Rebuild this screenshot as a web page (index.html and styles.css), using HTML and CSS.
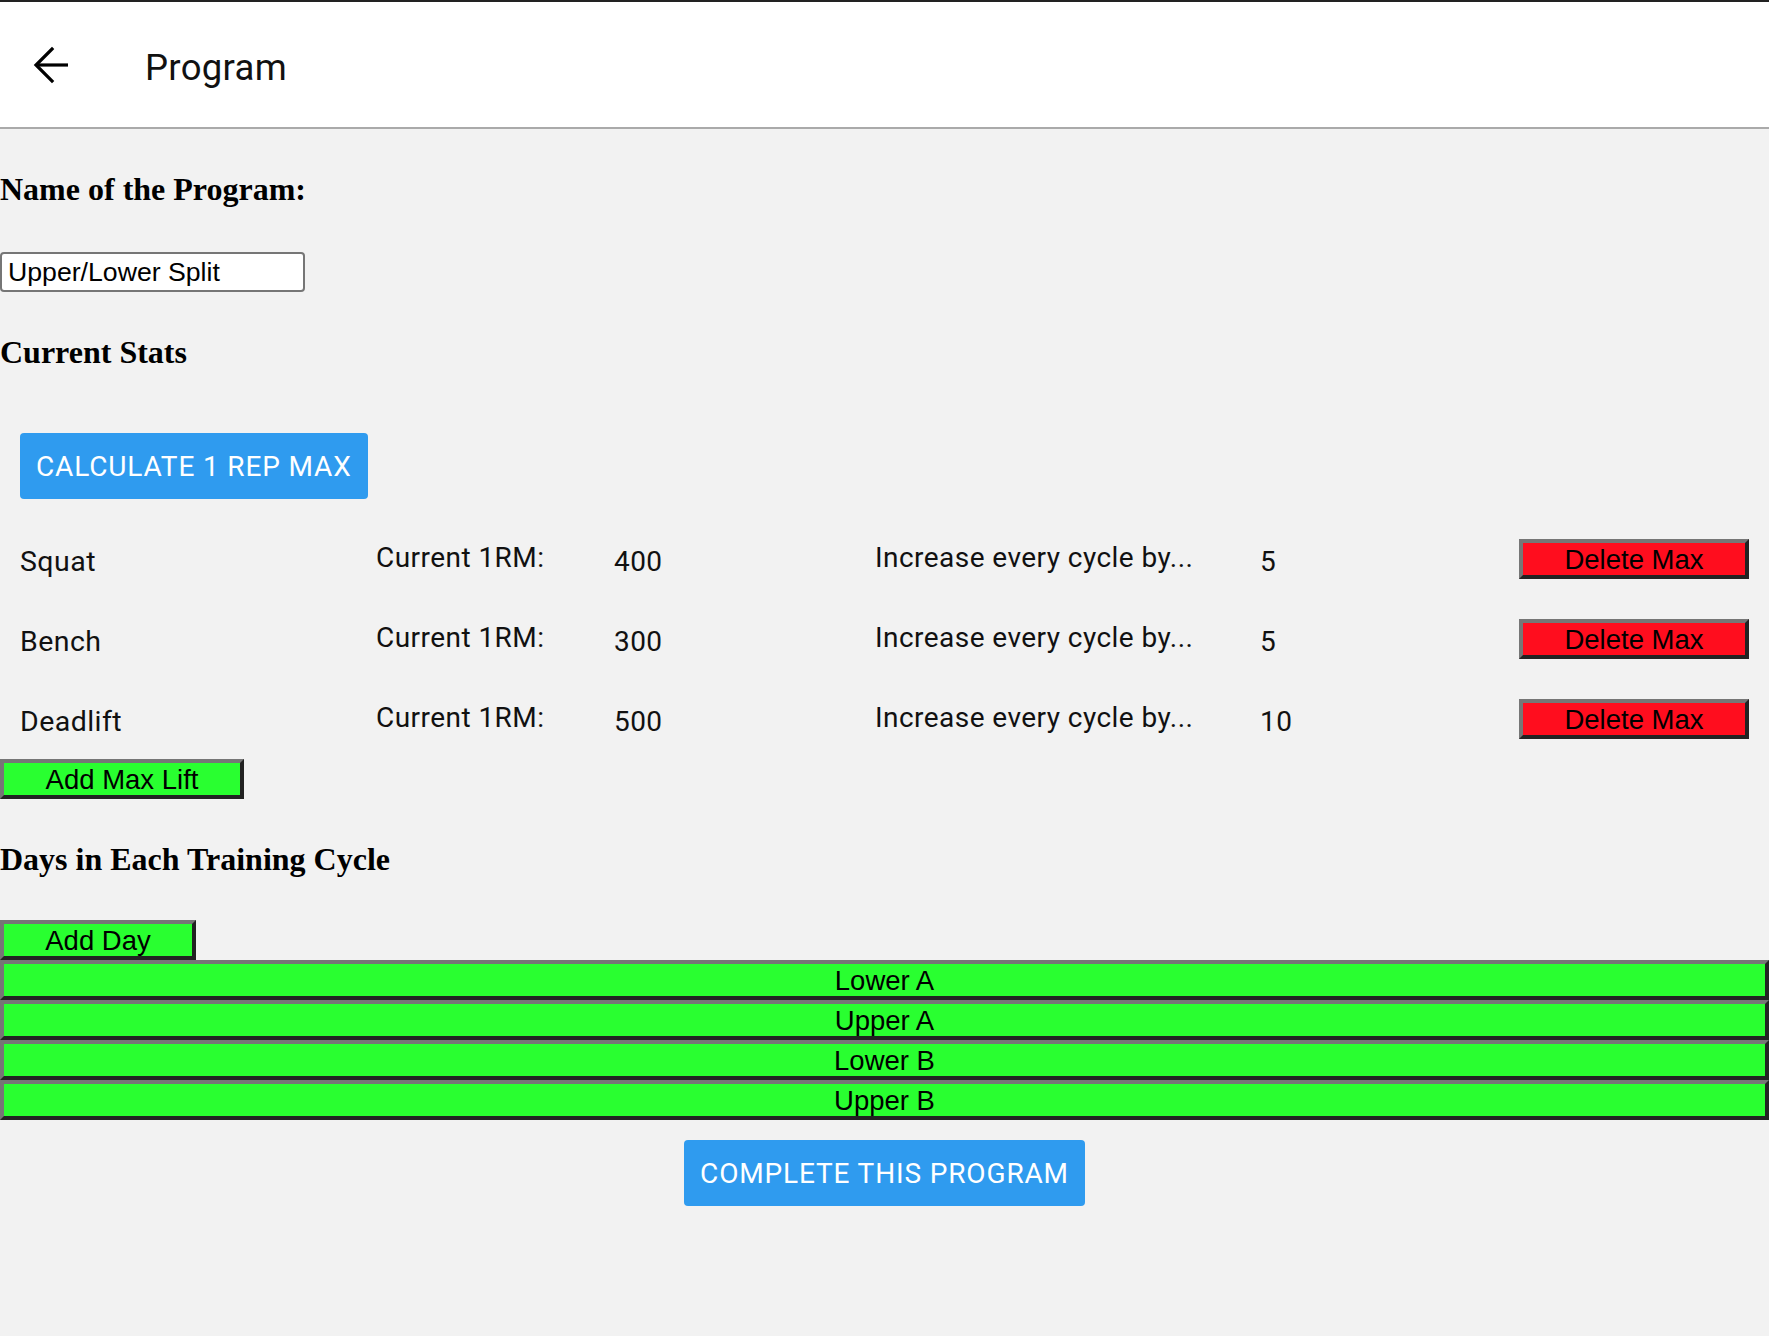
FILE: index.html
```html
<!DOCTYPE html>
<html>
<head>
<meta charset="utf-8">
<link rel="stylesheet" href="styles.css">
</head>
<body>
<header class="topbar">
  <svg class="back" width="48" height="48" viewBox="0 0 48 48" aria-hidden="true">
    <polyline points="24,8 8,24 24,40" fill="none" stroke="#000" stroke-width="3.2" stroke-linecap="square" stroke-linejoin="miter"/>
    <line x1="9" y1="24" x2="40" y2="24" stroke="#000" stroke-width="3.2"/>
  </svg>
  <div class="title">Program</div>
</header>
<main class="page">
  <h4 class="heading">Name of the Program:</h4>
  <div><input class="name-input" type="text" value="Upper/Lower Split"></div>
  <h4 class="heading">Current Stats</h4>
  <div class="blue-wrap left"><button class="blue-btn">Calculate 1 Rep Max</button></div>
  <div class="lifts">
    <div class="lift-row">
      <span class="lift-name">Squat</span>
      <span class="lift-label">Current 1RM:</span>
      <span class="lift-val">400</span>
      <span class="lift-label">Increase every cycle by...</span>
      <span class="lift-val">5</span>
      <button class="bevel red">Delete Max</button>
    </div>
    <div class="lift-row">
      <span class="lift-name">Bench</span>
      <span class="lift-label">Current 1RM:</span>
      <span class="lift-val">300</span>
      <span class="lift-label">Increase every cycle by...</span>
      <span class="lift-val">5</span>
      <button class="bevel red">Delete Max</button>
    </div>
    <div class="lift-row">
      <span class="lift-name">Deadlift</span>
      <span class="lift-label">Current 1RM:</span>
      <span class="lift-val">500</span>
      <span class="lift-label">Increase every cycle by...</span>
      <span class="lift-val">10</span>
      <button class="bevel red">Delete Max</button>
    </div>
  </div>
  <button class="bevel green add-max">Add Max Lift</button>
  <h4 class="heading">Days in Each Training Cycle</h4>
  <button class="bevel green add-day">Add Day</button>
  <div class="days">
    <button class="bevel green day">Lower A</button>
    <button class="bevel green day">Upper A</button>
    <button class="bevel green day">Lower B</button>
    <button class="bevel green day">Upper B</button>
  </div>
  <div class="blue-wrap center"><button class="blue-btn">Complete This Program</button></div>
</main>
</body>
</html>
```

FILE: styles.css
```css
html, body {
  margin: 0;
  padding: 0;
  background: #f2f2f2;
}

.topbar {
  display: flex;
  align-items: center;
  height: 125px;
  background: #fff;
  border-top: 2px solid #222;
  border-bottom: 2px solid #aaaaaa;
  padding-left: 28px;
  gap: 69px;
}

.back {
  display: block;
  flex: none;
}

.title {
  font-family: Roboto, "Noto Sans", sans-serif;
  font-size: 36.5px;
  letter-spacing: 0.3px;
  color: #111;
  padding-top: 6px;
}

.page {
  display: flex;
  flex-direction: column;
  align-items: flex-start;
}

.heading {
  font-family: "Liberation Serif", "Times New Roman", serif;
  font-weight: bold;
  font-size: 32px;
  margin: 42px 0 42px 0;
  color: #000;
}

.name-input {
  display: block;
  box-sizing: border-box;
  width: 305px;
  height: 40px;
  margin: 2px 0 0 0;
  border: 2px solid #767676;
  border-radius: 4px;
  background: #fff;
  padding: 0 6px;
  font-family: "Liberation Sans", Arial, sans-serif;
  font-size: 26.67px;
  color: #000;
}

.blue-wrap {
  align-self: stretch;
  display: flex;
  padding: 20px;
}

.blue-wrap.left {
  justify-content: flex-start;
}

.blue-wrap.center {
  justify-content: center;
  padding: 20px 0;
}

.blue-btn {
  height: 66px;
  padding: 0 16px;
  border: none;
  border-radius: 4px;
  background: #2f9bef;
  color: #fff;
  font-family: Roboto, "Noto Sans", sans-serif;
  font-size: 28px;
  letter-spacing: 0.85px;
  text-transform: uppercase;
}

.lifts {
  align-self: stretch;
  display: flex;
  flex-direction: column;
  padding: 0 20px;
}

.lift-row {
  display: grid;
  grid-template-columns: 356px 238px 261px 385px 1fr 230px;
  align-items: center;
  height: 80px;
  font-family: Roboto, "Noto Sans", sans-serif;
  font-size: 28px;
  letter-spacing: 0.45px;
  color: #111;
}

.lift-name {
  font-size: 28.5px;
  padding-top: 4px;
}

.lift-label {
  padding-bottom: 4px;
}

.lift-val {
  padding-top: 4px;
}

.bevel {
  box-sizing: border-box;
  height: 40px;
  padding: 2px 0 0 0;
  border-width: 4px;
  border-style: solid;
  border-color: #767676 #222222 #222222 #767676;
  font-family: "Liberation Sans", Arial, sans-serif;
  font-size: 27.5px;
  letter-spacing: 0;
  color: #000;
  text-align: center;
  line-height: 30px;
}

.red {
  background: #ff0d1e;
  width: 230px;
}

.green {
  background: #29ff30;
}

.add-max {
  width: 244px;
}

.add-day {
  width: 196px;
}

.days {
  align-self: stretch;
  display: flex;
  flex-direction: column;
}

.day {
  width: 100%;
}
```
